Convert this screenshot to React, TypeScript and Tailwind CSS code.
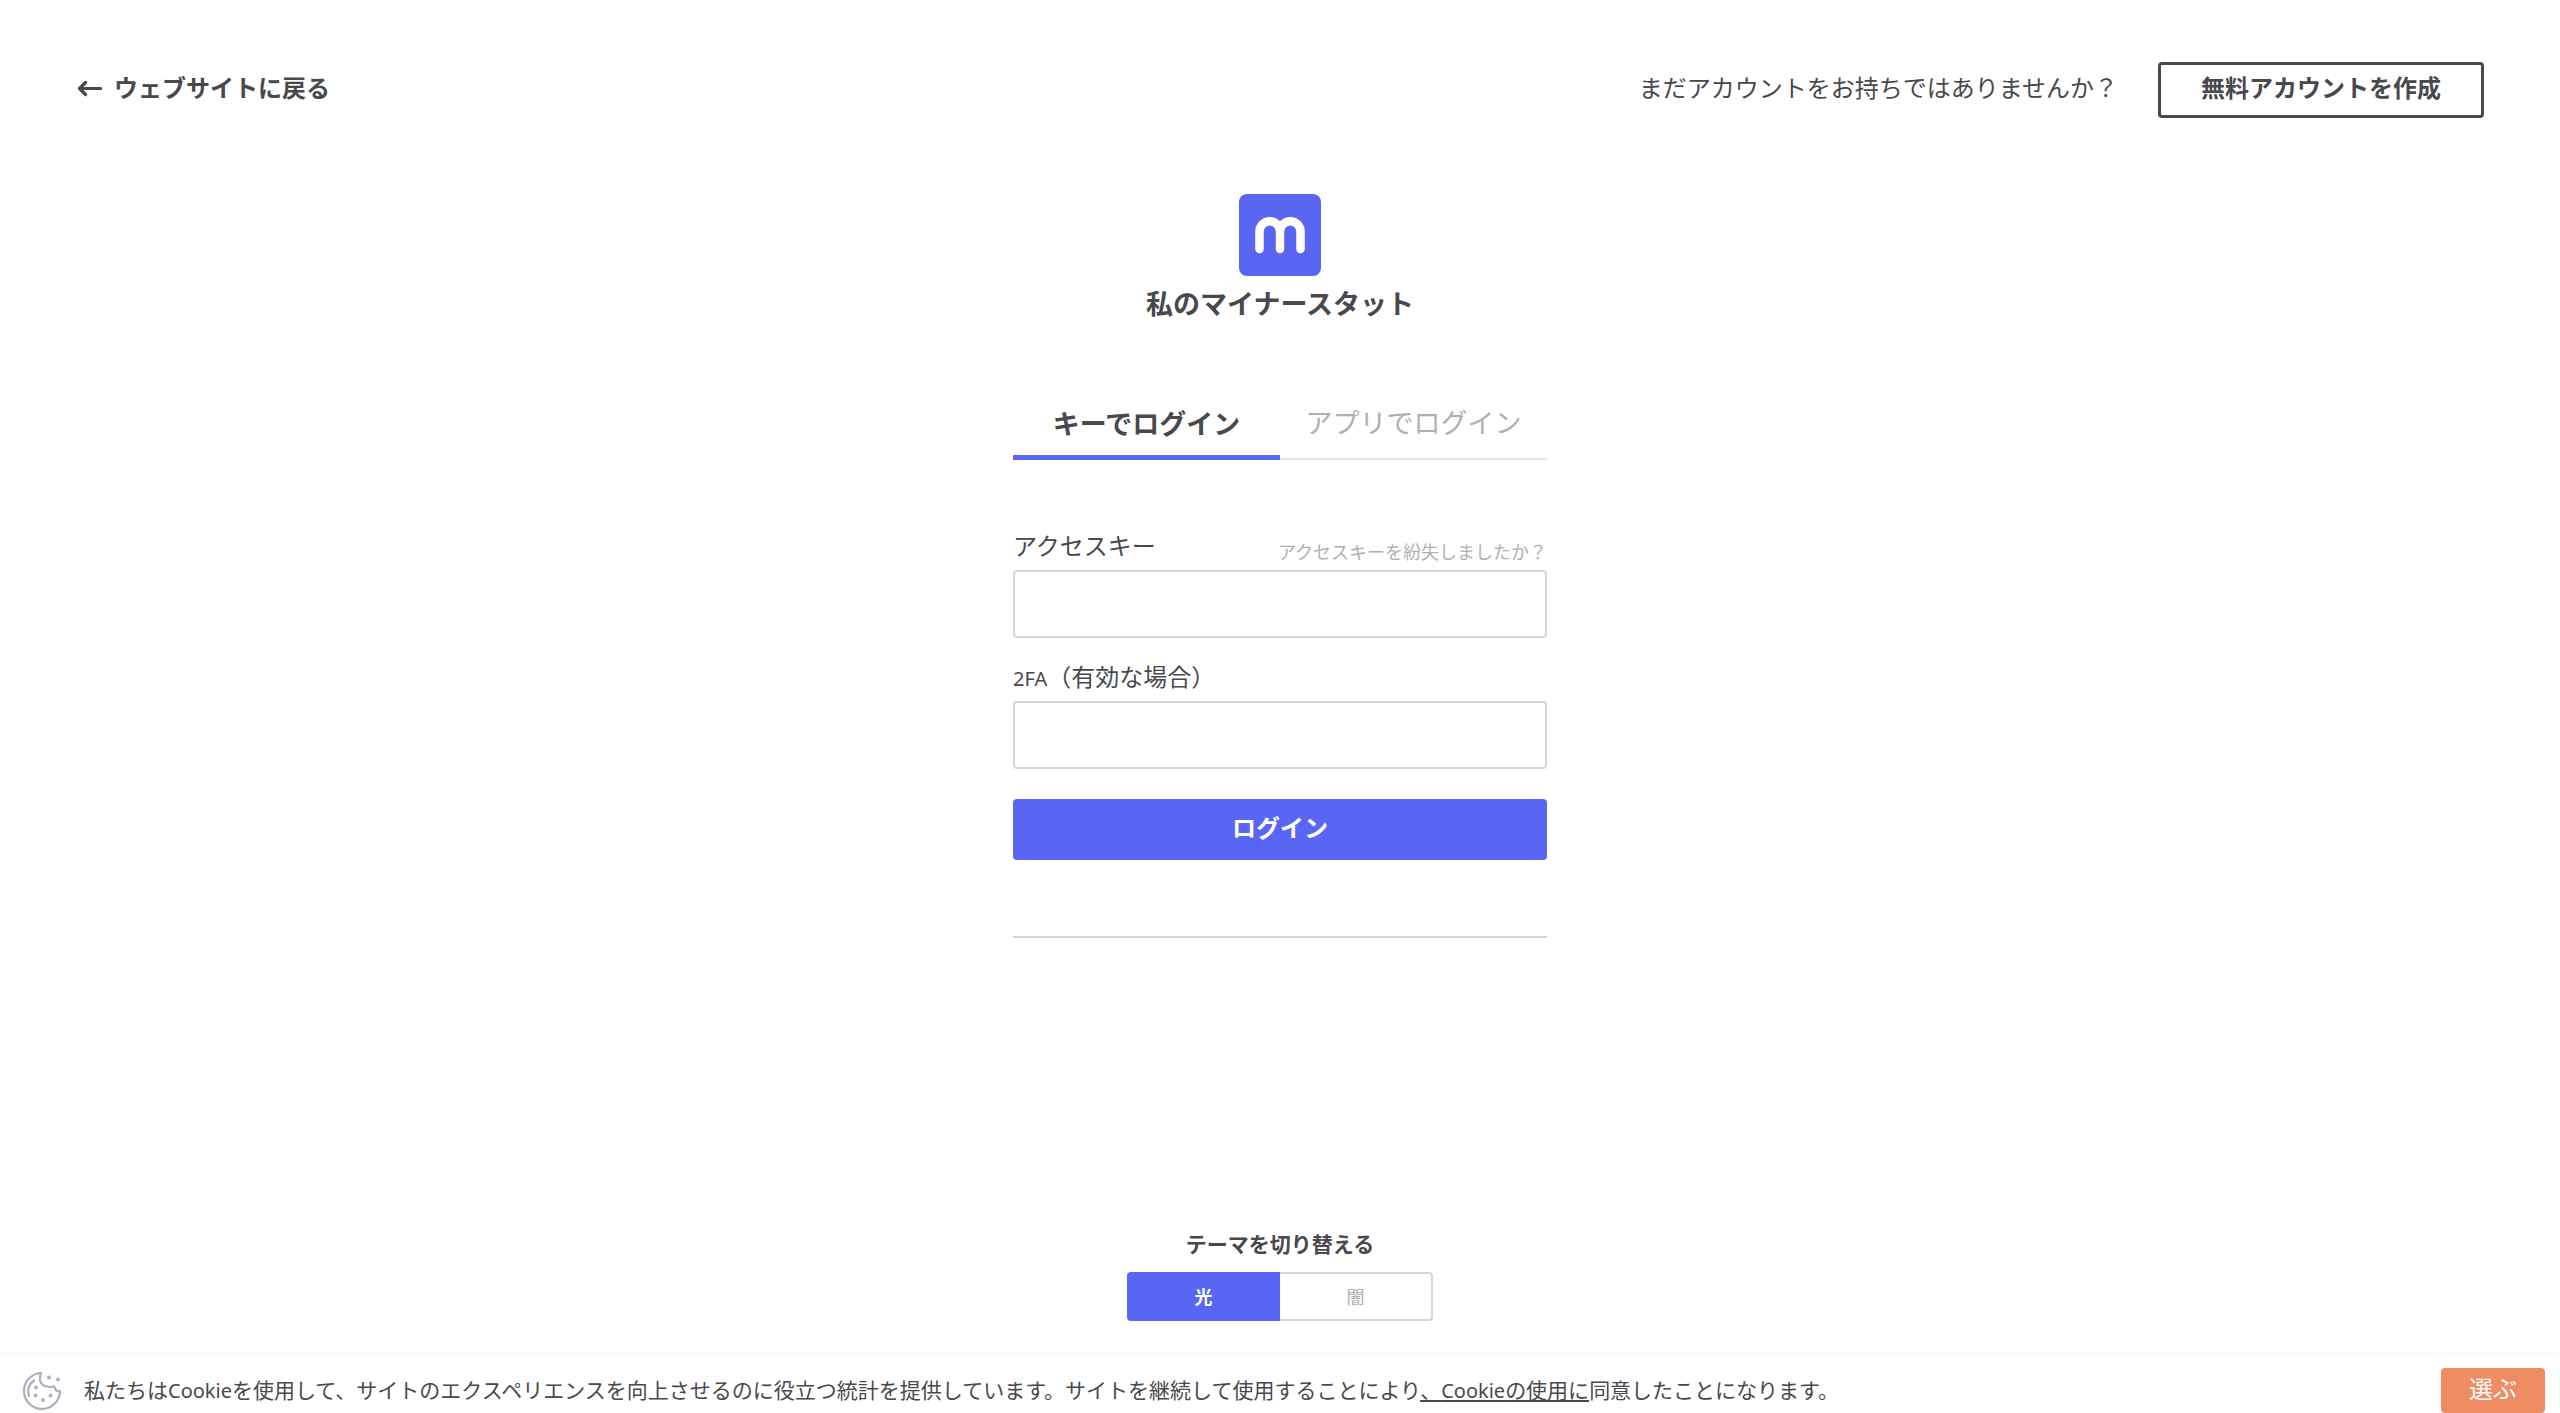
import { useState } from "react";

function ArrowLeft() {
  return (
    <svg viewBox="0 0 26 20" className="h-5 w-[26px]" fill="none" stroke="currentColor" strokeWidth="3.2" strokeLinecap="round" strokeLinejoin="round" aria-hidden="true">
      <path d="M9.500 4.500 3.500 10.500l6 6M4 10.500h20.500" />
    </svg>
  );
}

function Logo() {
  return (
    <svg viewBox="0 0 82 82" className="size-[82px]" aria-hidden="true">
      <rect width="82" height="82" rx="8" fill="#5966f3" />
      <path d="M20.500 55V37.500a10.250 10.250 0 0 1 20.500 0V55M41 37.500a10.250 10.250 0 0 1 20.500 0V55" fill="none" stroke="#fff" strokeWidth="8.500" strokeLinecap="round" />
    </svg>
  );
}

function CookieIcon() {
  return (
    <svg viewBox="0 0 40 40" className="size-10 shrink-0" fill="none" stroke="#abb0bb" strokeWidth="2.2" strokeLinecap="round" strokeLinejoin="round" aria-hidden="true">
      <path d="M19 2a18 18 0 1 0 19 18c-2.500.5-4.500-.5-5-2.500-.3-1.200-.5-2.500-1.500-2.500-1.500 1.300-3.500 1.500-5.500.5-4.500 0-7.500-3-8-6.500-.3-2.500 0-5 1-7Z" />
      <path d="M12 9.500c-5 3.500-7 9-5 15.500" />
      <g fill="#abb0bb" stroke="none">
        <circle cx="27" cy="6.500" r="2" />
        <circle cx="36" cy="8.500" r="2" />
        <circle cx="14" cy="16.500" r="2" />
        <circle cx="13.500" cy="24.500" r="2" />
        <circle cx="21" cy="29" r="2" />
        <circle cx="28.500" cy="24.500" r="2" />
      </g>
    </svg>
  );
}

export default function App() {
  const [theme, setTheme] = useState("light");
  return (
    <div lang="ja" className="flex min-h-screen flex-col bg-white font-['Noto_Sans','Noto_Sans_CJK_JP',sans-serif] text-2xl text-[#48484d]">
      <header className="flex items-center justify-between px-[76px] pt-[62px]">
        <a href="#" className="flex items-center gap-3 pb-1 font-bold">
          <ArrowLeft />
          <span className="leading-9">ウェブサイトに戻る</span>
        </a>
        <div className="flex items-center gap-10">
          <span className="pb-1 leading-9">まだアカウントをお持ちではありませんか？</span>
          <a href="#" className="flex h-14 w-[326px] items-center justify-center rounded-sm border-3 border-[#48484d] pb-1 font-bold">無料アカウントを作成</a>
        </div>
      </header>

      <main className="mx-auto flex w-full max-w-[534px] flex-1 flex-col">
        <h1 className="mt-[76px] flex flex-col items-center gap-2 text-[27px] leading-10 font-bold">
          <Logo />
          私のマイナースタット
        </h1>

        <nav className="mt-[68px] grid grid-cols-2 text-[27px] leading-10">
          <button type="button" className="h-[68px] border-b-5 border-[#5966f3] font-bold">キーでログイン</button>
          <button type="button" className="h-[68px] border-b-2 border-[#e4e4e6] pb-1 text-[#b0b0b4]">アプリでログイン</button>
        </nav>

        <form className="mt-[66px] flex flex-col" onSubmit={(e) => e.preventDefault()}>
          <div className="flex items-end justify-between">
            <label htmlFor="key" className="pb-1 leading-10">アクセスキー</label>
            <a href="#" className="text-lg leading-9 text-[#b0b0b4]">アクセスキーを紛失しましたか？</a>
          </div>
          <input id="key" type="text" className="h-[68px] rounded-sm border-2 border-[#d5d5da] px-4" />
          <label htmlFor="code" className="mt-[19px] pb-1 leading-10"><span className="text-xl">2FA</span>（有効な場合）</label>
          <input id="code" type="text" className="h-[68px] rounded-sm border-2 border-[#d5d5da] px-4" />
          <button type="submit" className="mt-[30px] h-[61px] rounded-sm bg-[#5966f3] pb-1 font-bold text-white">ログイン</button>
        </form>
        <hr className="mt-[76px] border-t-2 border-[#d5d5da]" />

        <fieldset className="mt-auto mb-[34px] flex flex-col items-center">
          <legend className="mx-auto mb-2.5 text-[21px] leading-9 font-bold">テーマを切り替える</legend>
          <div className="grid h-[49px] w-[306px] grid-cols-2 text-lg">
            <button type="button" aria-pressed={theme === "light"} onClick={() => setTheme("light")} className="rounded-l-sm bg-[#5966f3] font-bold text-white">光</button>
            <button type="button" aria-pressed={theme === "dark"} onClick={() => setTheme("dark")} className="rounded-r-sm border-2 border-l-0 border-[#d5d5da] text-[#b0b0b4]">闇</button>
          </div>
        </fieldset>
      </main>

      <footer className="flex items-center pt-[13px] pr-[15px] pl-[22px] text-[21px] shadow-[0_0_8px_rgba(0,0,0,0.04)]">
        <CookieIcon />
        <p className="ml-[22px] flex-1 pb-0.5 leading-9">
          私たちは<span className="text-xl">Cookie</span>を使用して、サイトのエクスペリエンスを向上させるのに役立つ統計を提供しています。サイトを継続して使用することにより
          <a href="#" className="underline underline-offset-2">、<span className="text-xl">Cookie</span>の使用に</a>同意したことになります。
        </p>
        <button type="button" className="h-[45px] w-[104px] rounded-sm bg-[#f08c62] pb-1 text-2xl text-white">選ぶ</button>
      </footer>
    </div>
  );
}
